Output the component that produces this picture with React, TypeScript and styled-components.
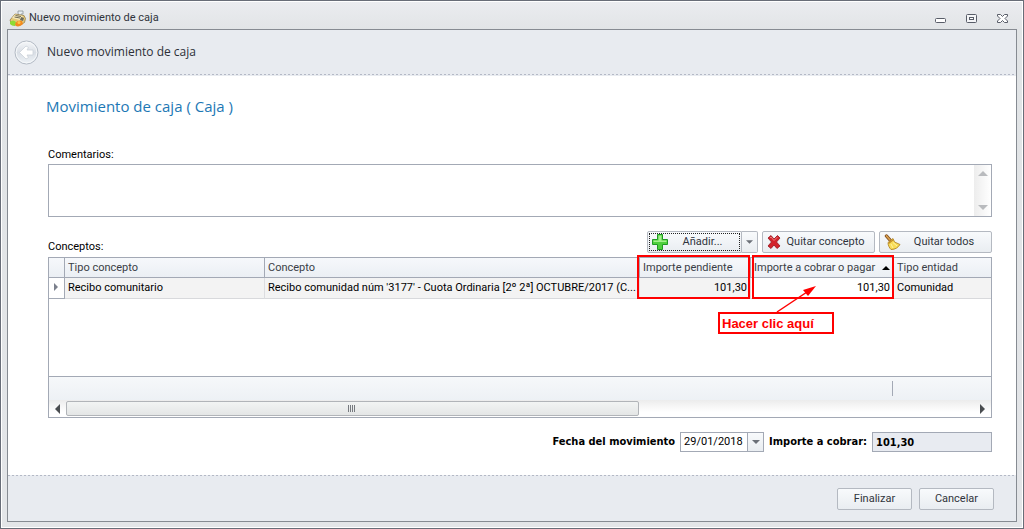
import React from "react";
import styled, { createGlobalStyle } from "styled-components";

const UI = `Roboto, "DejaVu Sans Condensed", sans-serif`;
const BOLD = `"DejaVu Sans Condensed", "DejaVu Sans", sans-serif`;
const LIGHT = `"Open Sans", "Noto Sans", sans-serif`;
const LINE = "#a3a9b5";

const Global = createGlobalStyle`
  *, *::before, *::after { box-sizing: border-box; }
  body { margin: 0; font: 11px/14px ${UI}; color: #000; background: #fff; }
  button, input, textarea { font: inherit; color: inherit; margin: 0; }
`;

const Window = styled.div`
  min-height: 100vh;
  display: flex;
  flex-direction: column;
  padding: 0 6px 6px;
  border: 1px solid #686d78;
  box-shadow: inset 0 0 0 1px #fff;
  background: linear-gradient(#ebecf0, #e1e4e6 30px, #e3e5e8);
`;

const TitleBar = styled.header`
  display: flex;
  align-items: center;
  height: 28px;
  padding: 6px 9px 0 2px;
  gap: 3px;
  color: #30343c;
`;

const WindowTitle = styled.span`
  flex: 1;
`;

const WindowControls = styled.div`
  display: flex;
  gap: 20px;
`;

const WindowButton = styled.button`
  display: flex;
  padding: 0;
  border: 0;
  background: none;
`;

const Panel = styled.div`
  flex: 1;
  display: flex;
  flex-direction: column;
  border: 1px solid #868b92;
  background: #fff;
`;

const dashes = "repeating-linear-gradient(90deg, #b4b9c6 0 2px, #e8ebf0 2px 4px)";

const StepHeader = styled.div`
  display: flex;
  align-items: center;
  gap: 8px;
  height: 46px;
  padding: 0 6px 2px;
  font: 12px/16px ${LIGHT};
  color: #2d3038;
  background: ${dashes} 0 44px / 100% 1px no-repeat, #e8ebf0;
`;

const BackButton = styled.button`
  display: flex;
  padding: 0;
  border: 0;
  background: none;
`;

const Content = styled.main`
  flex: 1;
  display: flex;
  flex-direction: column;
  padding: 19px 24px 23px 40px;
`;

const Heading = styled.h1`
  margin: 0 0 31px -2px;
  font: 15px/22px ${LIGHT};
  color: #1d78b5;
`;

const FieldLabel = styled.label`
  height: 16px;
`;

const CommentBox = styled.div`
  display: flex;
  height: 53px;
  margin-bottom: 14px;
  border: 1px solid ${LINE};
`;

const CommentInput = styled.textarea`
  flex: 1;
  min-width: 0;
  padding: 2px 4px;
  border: 0;
  outline: 0;
  resize: none;
  overflow: hidden;
  background: #fff;
`;

const VerticalScroll = styled.div`
  display: flex;
  flex-direction: column;
  justify-content: space-between;
  align-items: center;
  width: 17px;
  padding: 6px 0;
  background: linear-gradient(90deg, #ededed, #fff);
`;

const Toolbar = styled.div`
  display: flex;
  align-items: flex-start;
  height: 26px;
`;

const ToolbarLabel = styled.h2`
  flex: 1;
  margin: 9px 0 0;
  font: inherit;
`;

const ButtonRow = styled.div`
  display: flex;
  gap: 4px;
`;

const Button = styled.button<{ $width: number }>`
  display: flex;
  align-items: center;
  width: ${(p) => p.$width}px;
  height: 22px;
  padding: 0 4px;
  border: 1px solid #b4b9c1;
  border-radius: 2px;
  background: linear-gradient(#f8fafc, #e9edf1);
  color: #30343c;
`;

const ButtonText = styled.span`
  flex: 1;
  text-align: center;
  white-space: nowrap;
`;

const SplitButton = styled.div`
  display: flex;
`;

const SplitMain = styled(Button)`
  border-radius: 2px 0 0 2px;
  outline: 1px dotted #222;
  outline-offset: -3px;
`;

const SplitArrow = styled(Button)`
  justify-content: center;
  border-left: 0;
  border-radius: 0 2px 2px 0;
`;

const GridArea = styled.section`
  position: relative;
  flex: 1;
  display: flex;
  flex-direction: column;
  min-height: 161px;
  border: 1px solid ${LINE};
`;

const GridTable = styled.table`
  width: 100%;
  table-layout: fixed;
  border-collapse: separate;
  border-spacing: 0;
`;

const Col = styled.col<{ $width?: number }>`
  width: ${(p) => (p.$width ? `${p.$width}px` : "auto")};
`;

const Th = styled.th`
  height: 20px;
  padding: 0 3px;
  border-right: 1px solid ${LINE};
  border-bottom: 1px solid ${LINE};
  background: linear-gradient(#f6f8fb, #ebeff4);
  color: #3a3e46;
  font-weight: normal;
  text-align: left;
  white-space: nowrap;
  &:last-child { border-right: 0; }
`;

const SortLabel = styled.span`
  display: flex;
  align-items: center;
  justify-content: space-between;
`;

const Td = styled.td<{ $numeric?: boolean; $active?: boolean }>`
  height: 21px;
  padding: 0 3px;
  overflow: hidden;
  border-right: 1px solid #dcdde0;
  border-bottom: 1px solid #d8d9dc;
  background: ${(p) => (p.$active ? "#fff" : "#f3f3f3")};
  text-align: ${(p) => (p.$numeric ? "right" : "left")};
  white-space: nowrap;
  &:last-child { border-right: 0; }
`;

const IndicatorCell = styled(Td)`
  padding: 0 5px;
  border-color: ${LINE};
  background: #fff;
`;

const GridFiller = styled.div`
  flex: 1;
`;

const GridSummary = styled.div`
  display: flex;
  justify-content: flex-end;
  height: 24px;
  padding: 4px 98px 4px 0;
  border-top: 1px solid ${LINE};
  background: linear-gradient(#f6f8fa, #edf1f5);
`;

const SummaryDivider = styled.span`
  width: 1px;
  background: ${LINE};
`;

const HorizontalScroll = styled.div`
  display: flex;
  align-items: center;
  justify-content: space-between;
  height: 17px;
  padding: 0 6px;
  background: linear-gradient(#ececec, #fff 12px);
`;

const ScrollTrack = styled.div`
  flex: 1;
  margin: 0 5px 0 6px;
`;

const ScrollThumb = styled.div`
  display: flex;
  align-items: center;
  justify-content: center;
  width: 63%;
  height: 15px;
  border: 1px solid #b1b4b8;
  border-radius: 2px;
  background: linear-gradient(#f2f4f3, #e4e6e6);
`;

const Mark = styled.div<{ $right: number; $width: number }>`
  position: absolute;
  top: -3px;
  right: ${(p) => p.$right}px;
  width: ${(p) => p.$width}px;
  height: 44px;
  border: 2px solid #f00;
  pointer-events: none;
`;

const Callout = styled.div`
  position: absolute;
  top: 54px;
  right: 157px;
  width: 116px;
  height: 22px;
  padding-left: 2px;
  border: 2px solid #f00;
  background: #fff;
  color: #f00;
  font: bold 13px/19px "Liberation Sans", Arial, sans-serif;
  white-space: nowrap;
`;

const Arrow = styled.svg`
  position: absolute;
  top: 28px;
  right: 174px;
`;

const TotalsRow = styled.div`
  display: flex;
  justify-content: flex-end;
  align-items: center;
  gap: 5px;
  height: 20px;
  margin-top: 14px;
`;

const BoldLabel = styled.label`
  font-family: ${BOLD};
  font-weight: bold;
  white-space: nowrap;
`;

const DateField = styled.div`
  display: flex;
  width: 84px;
  height: 20px;
  border: 1px solid ${LINE};
`;

const DateInput = styled.input`
  flex: 1;
  min-width: 0;
  padding: 0 3px;
  border: 0;
  outline: 0;
  background: #fff;
`;

const DateArrow = styled.button`
  display: flex;
  align-items: center;
  justify-content: center;
  width: 16px;
  padding: 0;
  border: 0;
  border-left: 1px solid ${LINE};
  background: linear-gradient(#f8fafc, #e9edf1);
`;

const TotalInput = styled.input`
  width: 120px;
  height: 20px;
  padding: 0 3px;
  border: 1px solid ${LINE};
  border-radius: 0;
  background: #e8ebf1;
  font-family: ${BOLD};
  font-weight: bold;
`;

const Footer = styled.footer`
  display: flex;
  justify-content: flex-end;
  gap: 7px;
  height: 46px;
  padding: 13px 22px 0 0;
  background: ${dashes} 0 0 / 100% 1px no-repeat, #e8ebf0;
`;

type Direction = "up" | "down" | "left" | "right";
const shapes: Record<Direction, string> = {
  up: "0,5 5,0 10,5",
  down: "0,0 10,0 5,5",
  left: "5,0 5,10 0,5",
  right: "0,0 5,5 0,10",
};

const Triangle = ({ dir, color, size = 5 }: { dir: Direction; color: string; size?: number }) => {
  const upright = dir === "up" || dir === "down";
  return (
    <svg
      width={upright ? size * 2 : size}
      height={upright ? size : size * 2}
      viewBox={upright ? "0 0 10 5" : "0 0 5 10"}
      aria-hidden="true"
    >
      <polygon points={shapes[dir]} fill={color} />
    </svg>
  );
};

const RegisterIcon = () => (
  <svg width="17" height="17" viewBox="0 0 17 17" aria-hidden="true">
    <path d="M9 3V1h5v3h-2v3h-2z" fill="#e8eef4" stroke="#8b9298" strokeWidth=".8" />
    <path d="M1 10l5-6 9 1.500 1.500 3-1 4-5 3-8-1z" fill="#e3c878" stroke="#8c7440" strokeWidth=".7" />
    <path d="M6 4.500l8 1.500-3 4-8-2z" fill="#f7e8b8" />
    <path d="M6.500 5.500l5.500 1M5.500 7l5.500 1" stroke="#4d4a3c" strokeWidth=".8" />
    <path d="M12 7l3 1-1 3-3-1z" fill="#6b6a60" />
    <path d="M1 12c2-2 4-2 6 0l-1 4c-2 0-4-1-5-2z" fill="#8edb34" />
    <path d="M6 14c1-3 4-4 7-3l1 3c-2 2-5 3-7 2z" fill="#f28a1c" />
    <circle cx="10" cy="12.500" r="1.500" fill="#ffc04b" />
  </svg>
);

const BackIcon = () => (
  <svg width="25" height="25" viewBox="0 0 25 25" aria-hidden="true">
    <defs>
      <linearGradient id="back" x1="0" y1="0" x2="0" y2="1">
        <stop offset="0" stopColor="#f7f8fa" />
        <stop offset=".5" stopColor="#d9dee5" />
        <stop offset="1" stopColor="#eef3f7" />
      </linearGradient>
    </defs>
    <circle cx="12.500" cy="12.500" r="11.500" fill="url(#back)" stroke="#b3bac4" />
    <circle cx="12.500" cy="12.500" r="10.300" fill="none" stroke="#f6f8fa" />
    <path d="M5.500 12.500L12 6l2.500 1.500-1.500 2.500h6v5h-6l1.500 2.500L12 19z" fill="#fff" stroke="#ccd2d9" strokeWidth=".8" strokeLinejoin="round" />
  </svg>
);

const PlusIcon = () => (
  <svg width="16" height="16" viewBox="0 0 16 16" aria-hidden="true">
    <path d="M5.500.5h5v5h5v5h-5v5h-5v-5h-5v-5h5z" fill="#4fd03c" stroke="#1f9a22" />
    <path d="M6.500 1.500h3v5h5v1.500h-13V6.500h5z" fill="#a4f08c" />
  </svg>
);

const CrossIcon = () => (
  <svg width="14" height="14" viewBox="0 0 14 14" aria-hidden="true">
    <path d="M1 3l3-2.500 3 3.500 3.500-3.500L13 3 9.500 7l3.500 4-3 2.500L7 10l-3 3.500L1 11l3.500-4z" fill="#d3232b" stroke="#96131a" strokeWidth=".8" strokeLinejoin="round" />
    <path d="M3 3l1-1 3 3.500L10.500 2" fill="none" stroke="#f07a78" />
  </svg>
);

const BroomIcon = () => (
  <svg width="17" height="17" viewBox="0 0 17 17" aria-hidden="true">
    <path d="M2.500 2l3.500 4" stroke="#7d4a1d" strokeWidth="3.400" strokeLinecap="round" />
    <path d="M2.500 2l3.500 4" stroke="#d9a04c" strokeWidth="1.800" strokeLinecap="round" />
    <path d="M4 8.500L9 4.500l1.500 3.500 5.500 2.500c-2 3-4.500 5-9 5-1.500-1.500-3-4-3-7z" fill="#f8dc58" stroke="#a97b18" strokeWidth=".8" />
    <path d="M4.500 9.500L9.500 5.500" stroke="#c08a28" strokeWidth="1.200" />
    <path d="M7 10l2 4M9 8.500l4 3.500" stroke="#fff2a0" />
  </svg>
);

const MinimizeIcon = () => (
  <svg width="11" height="12" viewBox="0 0 11 12" aria-hidden="true">
    <rect x=".5" y="6.500" width="10" height="4" rx="1" fill="#fff" stroke="#585d68" />
  </svg>
);

const MaximizeIcon = () => (
  <svg width="11" height="12" viewBox="0 0 11 12" aria-hidden="true">
    <rect x=".5" y="2.500" width="10" height="8" rx="1" fill="#f4f5f7" stroke="#585d68" />
    <rect x="3.500" y="5.500" width="4" height="2" fill="#fff" stroke="#585d68" />
  </svg>
);

const CloseIcon = () => (
  <svg width="11" height="12" viewBox="0 0 11 12" aria-hidden="true">
    <path d="M.5 2.500h3l2 2 2-2h3v1.500l-2.500 2.500 2.500 2.500v1.500h-3l-2-2-2 2h-3V9L3 6.500.5 4z" fill="#fff" stroke="#585d68" strokeLinejoin="round" />
  </svg>
);

const GripIcon = () => (
  <svg width="8" height="7" viewBox="0 0 8 7" aria-hidden="true">
    <path d="M.5 0v7M2.500 0v7M4.500 0v7M6.500 0v7" stroke="#777b80" />
  </svg>
);

export default function App() {
  return (
    <>
      <Global />
      <Window>
        <TitleBar>
          <RegisterIcon />
          <WindowTitle>Nuevo movimiento de caja</WindowTitle>
          <WindowControls>
            <WindowButton aria-label="Minimizar"><MinimizeIcon /></WindowButton>
            <WindowButton aria-label="Maximizar"><MaximizeIcon /></WindowButton>
            <WindowButton aria-label="Cerrar"><CloseIcon /></WindowButton>
          </WindowControls>
        </TitleBar>
        <Panel>
          <StepHeader>
            <BackButton aria-label="Atrás"><BackIcon /></BackButton>
            <span>Nuevo movimiento de caja</span>
          </StepHeader>
          <Content>
            <Heading>Movimiento de caja ( Caja )</Heading>
            <FieldLabel htmlFor="comentarios">Comentarios:</FieldLabel>
            <CommentBox>
              <CommentInput id="comentarios" />
              <VerticalScroll>
                <Triangle dir="up" color="#b9bbbe" />
                <Triangle dir="down" color="#b9bbbe" />
              </VerticalScroll>
            </CommentBox>
            <Toolbar>
              <ToolbarLabel>Conceptos:</ToolbarLabel>
              <ButtonRow>
                <SplitButton>
                  <SplitMain $width={95}><PlusIcon /><ButtonText>Añadir...</ButtonText></SplitMain>
                  <SplitArrow $width={16} aria-label="Más opciones">
                    <Triangle dir="down" color="#6b7078" size={4} />
                  </SplitArrow>
                </SplitButton>
                <Button $width={113}><CrossIcon /><ButtonText>Quitar concepto</ButtonText></Button>
                <Button $width={113}><BroomIcon /><ButtonText>Quitar todos</ButtonText></Button>
              </ButtonRow>
            </Toolbar>
            <GridArea>
              <GridTable>
                <colgroup>
                  <Col $width={16} />
                  <Col $width={200} />
                  <Col />
                  <Col $width={111} />
                  <Col $width={143} />
                  <Col $width={97} />
                </colgroup>
                <thead>
                  <tr>
                    <Th />
                    <Th>Tipo concepto</Th>
                    <Th>Concepto</Th>
                    <Th>Importe pendiente</Th>
                    <Th>
                      <SortLabel>
                        Importe a cobrar o pagar
                        <Triangle dir="up" color="#000" size={4} />
                      </SortLabel>
                    </Th>
                    <Th>Tipo entidad</Th>
                  </tr>
                </thead>
                <tbody>
                  <tr>
                    <IndicatorCell><Triangle dir="right" color="#7b808c" size={4} /></IndicatorCell>
                    <Td>Recibo comunitario</Td>
                    <Td>Recibo comunidad núm '3177' - Cuota Ordinaria [2º 2ª] OCTUBRE/2017 (C...</Td>
                    <Td $numeric>101,30</Td>
                    <Td $numeric $active>101,30</Td>
                    <Td>Comunidad</Td>
                  </tr>
                </tbody>
              </GridTable>
              <GridFiller />
              <GridSummary><SummaryDivider /></GridSummary>
              <HorizontalScroll>
                <Triangle dir="left" color="#4a4d50" />
                <ScrollTrack><ScrollThumb><GripIcon /></ScrollThumb></ScrollTrack>
                <Triangle dir="right" color="#4a4d50" />
              </HorizontalScroll>
              <Mark $right={241} $width={113} />
              <Mark $right={97} $width={142} />
              <Callout>Hacer clic aquí</Callout>
              <Arrow width="42" height="28" viewBox="0 0 42 28" aria-hidden="true">
                <path d="M2 26L32 6" stroke="#f00" strokeWidth="1.500" />
                <polygon points="41,0 33,10 28,4" fill="#f00" />
              </Arrow>
            </GridArea>
            <TotalsRow>
              <BoldLabel htmlFor="fecha">Fecha del movimiento</BoldLabel>
              <DateField>
                <DateInput id="fecha" defaultValue="29/01/2018" />
                <DateArrow aria-label="Abrir calendario">
                  <Triangle dir="down" color="#6b7078" size={4} />
                </DateArrow>
              </DateField>
              <BoldLabel htmlFor="importe">Importe a cobrar:</BoldLabel>
              <TotalInput id="importe" defaultValue="101,30" readOnly />
            </TotalsRow>
          </Content>
          <Footer>
            <Button $width={75}><ButtonText>Finalizar</ButtonText></Button>
            <Button $width={75}><ButtonText>Cancelar</ButtonText></Button>
          </Footer>
        </Panel>
      </Window>
    </>
  );
}
